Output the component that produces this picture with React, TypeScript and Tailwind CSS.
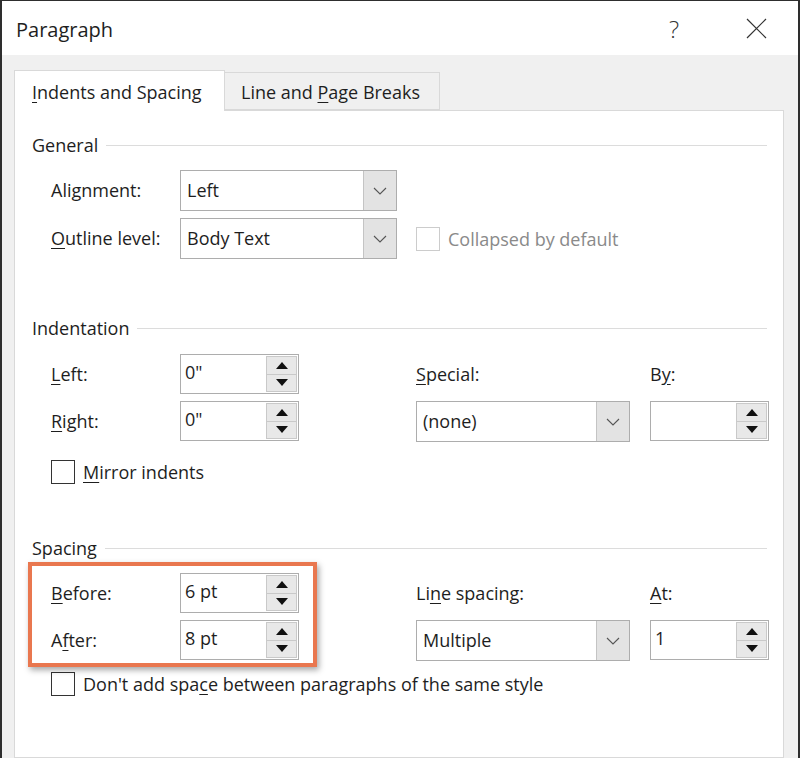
import React from 'react';

const font = { fontFamily: '"Open Sans", "Noto Sans", sans-serif' };

const Key: React.FC<{ children: React.ReactNode }> = ({ children }) => (
  <span className="underline decoration-1 underline-offset-[3px]">{children}</span>
);

const Chevron = () => (
  <svg width="14" height="8" viewBox="0 0 14 8" fill="none">
    <path d="M1 1l6 6 6-6" stroke="#555" strokeWidth="1.1" />
  </svg>
);

const Select: React.FC<{ value: string; className?: string }> = ({ value, className = '' }) => (
  <div className={`h-[41px] flex border border-[#adadad] bg-white ${className}`}>
    <div className="flex-1 flex items-center pl-[6px] text-[18px] text-[#1e1e1e]">{value}</div>
    <div className="w-[33px] bg-[#e3e3e3] border-l border-[#c4c4c4] flex items-center justify-center">
      <Chevron />
    </div>
  </div>
);

const Spin: React.FC<{ value: string }> = ({ value }) => (
  <div className="h-[40px] w-[119px] flex border border-[#adadad] bg-white">
    <div className="flex-1 flex items-start pt-[4px] pl-[4px] text-[18px] text-[#1e1e1e]">{value}</div>
    <div className="flex flex-col w-[31px] mt-[1px] mb-[1px] mr-[1px]">
      <div className="flex-1 flex items-center justify-center bg-[#e8e8e8] border border-[#c9c9c9]">
        <svg width="12" height="7" viewBox="0 0 12 7"><path d="M6 0L12 7H0z" fill="#111" /></svg>
      </div>
      <div className="flex-1 flex items-center justify-center bg-[#e8e8e8] border border-t-0 border-[#c9c9c9]">
        <svg width="12" height="7" viewBox="0 0 12 7"><path d="M0 0h12L6 7z" fill="#111" /></svg>
      </div>
    </div>
  </div>
);

const Check: React.FC<{ disabled?: boolean; children: React.ReactNode }> = ({ disabled, children }) => (
  <div className="h-[24px] flex items-center gap-[8px]">
    <div className={`w-[24px] h-[24px] border bg-white ${disabled ? 'border-[#cccccc]' : 'border-[#333333]'}`} />
    <span className={`text-[18px] leading-[24px] ${disabled ? 'text-[#8a8a8a]' : 'text-[#1e1e1e]'}`}>{children}</span>
  </div>
);

const Header: React.FC<{ title: string }> = ({ title }) => (
  <div className="h-[24px] flex items-center pl-[17px] pr-[16px] gap-[8px]">
    <span className="text-[18px] leading-[24px] text-[#1e1e1e]">{title}</span>
    <div className="flex-1 h-px bg-[#dcdcdc]" />
  </div>
);

const Label: React.FC<{ children: React.ReactNode }> = ({ children }) => (
  <div className="flex items-center text-[18px] text-[#1e1e1e]">{children}</div>
);

export default function App() {
  return (
    <div
      style={font}
      className="w-[800px] h-[758px] overflow-hidden bg-[#f0f0f0] border-t border-l-2 border-r-2 border-[#2e2e2e] flex flex-col"
    >
      <div className="h-[54px] bg-white flex items-center pl-[14px] shrink-0">
        <span className="text-[20px] text-[#1e1e1e] pt-[3px]">Paragraph</span>
        <span className="ml-auto text-[24px] font-light text-[#333] mr-[67px] pt-[2px]">?</span>
        <svg width="21" height="21" viewBox="0 0 21 21" className="mr-[31px]">
          <path d="M1 1l19 19M20 1L1 20" stroke="#333" strokeWidth="1.2" />
        </svg>
      </div>

      <div className="flex-1 flex flex-col pt-[15px] pl-[12px] pr-[14px]">
        <div className="flex items-end h-[41px] -mb-px relative z-10">
          <div className="h-[41px] w-[211px] bg-white border border-b-0 border-[#d9d9d9] flex items-center pl-[17px] pt-[3px] text-[18px] text-[#1e1e1e]">
            <Key>I</Key>ndents and Spacing
          </div>
          <div className="h-[38px] w-[215px] bg-[#f0f0f0] border border-l-0 border-[#d9d9d9] flex items-center pl-[16px] pt-[2px] text-[18px] text-[#1e1e1e] mb-px">
            Line and&nbsp;<Key>P</Key>age Breaks
          </div>
        </div>

        <div className="flex-1 bg-white border border-[#d9d9d9] flex flex-col pt-[22px]">
          <Header title="General" />
          <div className="pl-[36px] mt-[13px] grid grid-cols-[129px_217px_19px_auto] grid-rows-[41px_41px] gap-y-[7px]">
            <Label>Alignment:</Label>
            <Select value="Left" />
            <div />
            <div />
            <Label>
              <Key>O</Key>utline level:
            </Label>
            <Select value="Body Text" />
            <div />
            <div className="flex items-center">
              <Check disabled>Collapsed by default</Check>
            </div>
          </div>

          <div className="mt-[57px]">
            <Header title="Indentation" />
          </div>
          <div className="pl-[36px] mt-[14px] grid grid-cols-[129px_119px_117px_214px_20px_118px] grid-rows-[40px_41px] gap-y-[7px]">
            <Label>
              <Key>L</Key>eft:
            </Label>
            <Spin value={'0"'} />
            <div />
            <Label>
              <Key>S</Key>pecial:
            </Label>
            <div />
            <Label>
              B<Key>y</Key>:
            </Label>
            <Label>
              <Key>R</Key>ight:
            </Label>
            <Spin value={'0"'} />
            <div />
            <Select value="(none)" />
            <div />
            <Spin value="" />
          </div>
          <div className="pl-[36px] mt-[18px]">
            <Check>
              <Key>M</Key>irror indents
            </Check>
          </div>

          <div className="mt-[52px]">
            <Header title="Spacing" />
          </div>
          <div className="ml-[36px] mt-[13px] relative grid grid-cols-[129px_119px_117px_214px_20px_118px] grid-rows-[40px_41px] gap-y-[7px] w-max">
            <Label>
              <Key>B</Key>efore:
            </Label>
            <Spin value="6 pt" />
            <div />
            <Label>
              Li<Key>n</Key>e spacing:
            </Label>
            <div />
            <Label>
              <Key>A</Key>t:
            </Label>
            <Label>
              A<Key>f</Key>ter:
            </Label>
            <Spin value="8 pt" />
            <div />
            <Select value="Multiple" />
            <div />
            <Spin value="1" />
            <div className="absolute left-[-23px] top-[-11px] w-[289px] h-[105px] border-[4px] border-[#e9774f] shadow-[2px_3px_6px_rgba(0,0,0,0.35)] pointer-events-none" />
          </div>
          <div className="pl-[36px] mt-[11px]">
            <Check>
              Don't add spa<Key>c</Key>e between paragraphs of the same style
            </Check>
          </div>
        </div>
      </div>
    </div>
  );
}
